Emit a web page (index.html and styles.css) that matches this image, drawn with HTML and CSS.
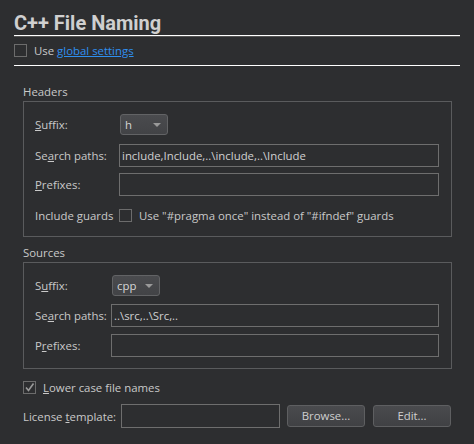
FILE: index.html
```html
<!DOCTYPE html>
<html>
<head>
<meta charset="utf-8">
<link rel="stylesheet" href="styles.css">
</head>
<body>
<div class="page">
  <div class="title">C++ File Naming</div>
  <div class="userow">
    <span class="cb"></span>
    <span class="txt">Use <a class="link" href="#">global settings</a></span>
  </div>
  <div class="content">
    <div class="glabel">Headers</div>
    <div class="group hdr">
      <div class="row r1">
        <span class="lbl"><u>S</u>uffix:</span>
        <span class="combo"><span class="cv">h</span><span class="arrow"></span></span>
      </div>
      <div class="row r2">
        <span class="lbl">Se<u>a</u>rch paths:</span>
        <span class="input">include,Include,..\include,..\Include</span>
      </div>
      <div class="row r3">
        <span class="lbl"><u>P</u>refixes:</span>
        <span class="input"></span>
      </div>
      <div class="row r4">
        <span class="lbl">Include guards</span>
        <span class="cb"></span>
        <span class="txt cbt">Use "#pragma once" instead of "#ifndef" guards</span>
      </div>
    </div>
    <div class="glabel second">Sources</div>
    <div class="group src">
      <div class="row r1">
        <span class="lbl">S<u>u</u>ffix:</span>
        <span class="combo"><span class="cv">cpp</span><span class="arrow"></span></span>
      </div>
      <div class="row r2">
        <span class="lbl">Se<u>a</u>rch paths:</span>
        <span class="input">..\src,..\Src,..</span>
      </div>
      <div class="row r3">
        <span class="lbl">P<u>r</u>efixes:</span>
        <span class="input"></span>
      </div>
    </div>
    <div class="lowerrow">
      <span class="cb checked"><svg width="13" height="13" viewBox="0 0 13 13"><path d="M3 6.5 L5.5 9.5 L10.5 2.5" fill="none" stroke="#9a9a9a" stroke-width="1.6"/></svg></span>
      <span class="txt"><u>L</u>ower case file names</span>
    </div>
    <div class="licrow">
      <span class="lbl">License <u>t</u>emplate:</span>
      <span class="input lic"></span>
      <span class="btn browse">Browse...</span>
      <span class="btn edit">Edit...</span>
    </div>
  </div>
</div>
</body>
</html>
```
FILE: styles.css
```css
html, body {
  margin: 0;
  padding: 0;
  background: #2d2e30;
}
body {
  font-family: "Open Sans", "Noto Sans", sans-serif;
  font-size: 11.4px;
  color: #c9c9c9;
  width: 474px;
  height: 444px;
  overflow: hidden;
}
.page {
  padding: 0 14px 0 14px;
}
.title {
  font-family: Roboto, "Open Sans", sans-serif;
  font-size: 20px;
  font-weight: 700;
  color: #cfcfcf;
  height: 36px;
  line-height: 20px;
  box-sizing: border-box;
  display: flex;
  align-items: flex-end;
  padding-bottom: 2px;
  border-bottom: 1px solid #ffffff;
  box-shadow: 0 1px 0 #555;
}
.userow {
  display: flex;
  align-items: center;
  height: 14px;
  margin-top: 7px;
  padding-bottom: 8px;
  border-bottom: 1px solid #ffffff;
}
.cb {
  display: inline-block;
  width: 11px;
  height: 11px;
  border: 1px solid #6c6c6c;
  flex: none;
}
.cb svg { display: block; margin: -1px; }
.txt {
  margin-left: 7px;
  white-space: nowrap;
}
.link {
  color: #2f8ff0;
  text-decoration: underline;
}
.content {
  padding: 0 8px 0 9px;
}
.glabel {
  height: 16px;
  line-height: 16px;
  margin-top: 18px;
}
.glabel.second {
  margin-top: 8px;
}
.group {
  border: 1px solid #5a5b5d;
  margin-top: 1px;
  padding: 12px 12px 11px 11px;
}
.row {
  display: flex;
  align-items: center;
}
.lbl {
  white-space: nowrap;
  flex: none;
}
.hdr .lbl { width: 84px; }
.src .lbl { width: 76px; }
.hdr .r1 { height: 21px; }
.hdr .r2 { height: 23px; margin-top: 9px; }
.hdr .r3 { height: 23px; margin-top: 6px; }
.hdr .r4 { height: 20px; margin-top: 9px; }
.src .r1 { height: 21px; }
.src .r2 { height: 23px; margin-top: 8px; }
.src .r3 { height: 23px; margin-top: 7px; }
.combo {
  display: flex;
  align-items: center;
  justify-content: space-between;
  box-sizing: border-box;
  width: 48px;
  height: 21px;
  border: 1px solid #626365;
  border-radius: 3px;
  background: linear-gradient(#4a4b4e, #424346);
  margin-left: 1px;
  padding: 0 6px 0 4px;
}
.cv { color: #d6d6d6; }
.arrow {
  width: 0;
  height: 0;
  border-left: 4px solid transparent;
  border-right: 4px solid transparent;
  border-top: 4px solid #9a9a9a;
}
.input {
  flex: 1;
  box-sizing: border-box;
  height: 23px;
  border: 1px solid #6e6e6e;
  line-height: 21px;
  padding-left: 2px;
  white-space: nowrap;
  color: #d0d0d0;
}
.cbt { margin-left: 7px; }
.lowerrow {
  display: flex;
  align-items: center;
  height: 16px;
  margin-top: 10px;
}
.licrow {
  display: flex;
  align-items: center;
  height: 24px;
  margin-top: 9px;
}
.licrow .lbl { width: 98px; }
.input.lic {
  flex: none;
  width: 159px;
  height: 24px;
}
.btn {
  flex: none;
  box-sizing: border-box;
  height: 22px;
  border: 1px solid #5e5f61;
  border-radius: 3px;
  background: linear-gradient(#4a4b4e, #404144);
  text-align: center;
  line-height: 20px;
  color: #cfcfcf;
}
.browse { width: 78px; margin-left: 7px; }
.edit { width: 78px; margin-left: 8px; }
```
